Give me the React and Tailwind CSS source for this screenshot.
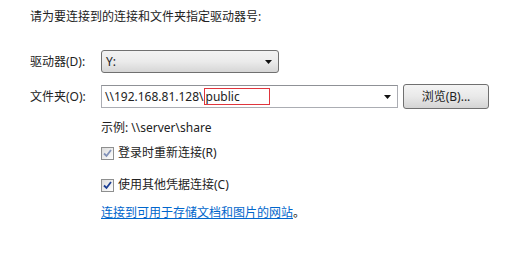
import React from "react";

const font = { fontFamily: '"Noto Sans", "Noto Sans CJK SC", sans-serif' };

const Check = ({ color }) => (
  <span className="w-[13px] h-[13px] border border-[#8e8f8f] bg-gradient-to-br from-[#dcdcdc] to-[#ffffff] flex items-center justify-center shrink-0">
    <svg width="9" height="9" viewBox="0 0 9 9">
      <path d="M1 4.5 L3.5 7 L8 1" stroke={color} strokeWidth="1.8" fill="none" />
    </svg>
  </span>
);

const Arrow = () => (
  <svg width="7" height="4" viewBox="0 0 7 4">
    <path d="M0 0 H7 L3.5 4 Z" fill="#111" />
  </svg>
);

export default function App() {
  return (
    <div className="w-[523px] h-[264px] bg-white text-[12px] text-[#222] pl-[30px] pt-[7px]" style={font}>
      <div className="leading-5">请为要连接到的连接和文件夹指定驱动器号:</div>

      <div className="flex items-center mt-[23px] h-[23px]">
        <span className="w-[71px]">驱动器(D):</span>
        <div className="w-[178px] h-[23px] border border-[#707070] rounded-[3px] bg-gradient-to-b from-[#f2f2f2] via-[#ebebeb] to-[#d6d6d6] flex items-center justify-between pl-[4px] pr-[6px]">
          <span>Y:</span>
          <Arrow />
        </div>
      </div>

      <div className="flex items-center mt-[11px] h-[25px]">
        <span className="w-[71px]">文件夹(O):</span>
        <div className="w-[297px] h-[23px] border border-[#abadb3] border-t-[#8f9196] bg-white flex items-center justify-between pl-[3px] pr-[6px]">
          <span className="flex items-center">
            \\192.168.81.128\
            <span className="border border-[#e0353d] w-[66px] h-[17px] leading-[15px] pl-[1px]">public</span>
          </span>
          <Arrow />
        </div>
        <button className="ml-[5px] w-[86px] h-[25px] border border-[#707070] rounded-[3px] bg-gradient-to-b from-[#f4f4f4] via-[#e9e9e9] to-[#d4d4d4] text-[12px]">
          浏览(B)...
        </button>
      </div>

      <div className="ml-[71px] mt-[9px] leading-5">示例: \\server\share</div>

      <label className="ml-[71px] mt-[5px] flex items-center gap-[4px] h-5">
        <Check color="#8292b8" />
        <span>登录时重新连接(R)</span>
      </label>

      <label className="ml-[71px] mt-[12px] flex items-center gap-[4px] h-5">
        <Check color="#1c3f94" />
        <span>使用其他凭据连接(C)</span>
      </label>

      <div className="ml-[71px] mt-[8px] leading-5">
        <a className="text-[#0066cc] underline">连接到可用于存储文档和图片的网站</a>。
      </div>
    </div>
  );
}
